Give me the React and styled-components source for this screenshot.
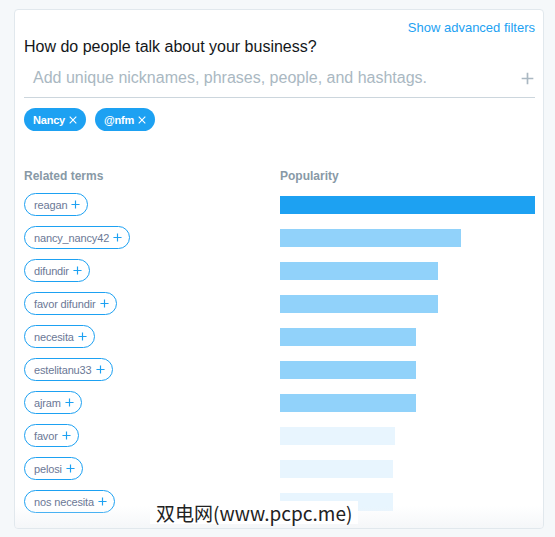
import React from "react";
import styled, { createGlobalStyle } from "styled-components";

const terms = [
  { label: "reagan", width: 255, level: "top" },
  { label: "nancy_nancy42", width: 181, level: "mid" },
  { label: "difundir", width: 158, level: "mid" },
  { label: "favor difundir", width: 158, level: "mid" },
  { label: "necesita", width: 136, level: "mid" },
  { label: "estelitanu33", width: 136, level: "mid" },
  { label: "ajram", width: 136, level: "mid" },
  { label: "favor", width: 115, level: "low" },
  { label: "pelosi", width: 113, level: "low" },
  { label: "nos necesita", width: 113, level: "low" },
];

const barColors = {
  top: "#1da1f2",
  mid: "#91d2fa",
  low: "#e8f5fe",
};

const PlusIcon = ({ size = 9 }) => (
  <svg width={size} height={size} viewBox="0 0 10 10">
    <path d="M5 0.5v9M0.5 5h9" stroke="currentColor" strokeWidth="1.3" fill="none" />
  </svg>
);

const CloseIcon = () => (
  <svg width="8" height="8" viewBox="0 0 8 8">
    <path d="M0.7 0.7l6.6 6.6M7.3 0.7l-6.6 6.6" stroke="currentColor" strokeWidth="1.1" fill="none" />
  </svg>
);

const App = () => {
  return (
    <>
      <GlobalStyle />
      <Card>
        <TopBar>
          <FilterLink>Show advanced filters</FilterLink>
        </TopBar>
        <Question>How do people talk about your business?</Question>
        <InputRow>
          <Placeholder>Add unique nicknames, phrases, people, and hashtags.</Placeholder>
          <AddButton>
            <PlusIcon size={13} />
          </AddButton>
        </InputRow>
        <Tags>
          <Tag>
            Nancy <CloseIcon />
          </Tag>
          <Tag>
            @nfm <CloseIcon />
          </Tag>
        </Tags>
        <Table>
          <ColHead>Related terms</ColHead>
          <ColHead>Popularity</ColHead>
          {terms.map((t) => (
            <React.Fragment key={t.label}>
              <TermCell>
                <Term>
                  {t.label}
                  <PlusWrap>
                    <PlusIcon />
                  </PlusWrap>
                </Term>
              </TermCell>
              <BarCell>
                <Bar $color={barColors[t.level]} style={{ width: t.width }} />
              </BarCell>
            </React.Fragment>
          ))}
        </Table>
        <Fade />
      </Card>
      <Watermark>双电网(www.pcpc.me)</Watermark>
    </>
  );
};

const GlobalStyle = createGlobalStyle`
  body {
    margin: 0;
    background: #f5f8fa;
    font-family: "Liberation Sans", Arial, sans-serif;
  }
`;

const Card = styled.div`
  position: relative;
  box-sizing: border-box;
  margin: 9px 0 0 14px;
  width: 530px;
  height: 520px;
  padding: 9px 8px 0 9px;
  background: #fff;
  border: 1px solid #e1e8ed;
  border-radius: 4px;
  overflow: hidden;
`;

const TopBar = styled.div`
  display: flex;
  justify-content: flex-end;
  height: 18px;
`;

const FilterLink = styled.a`
  font-size: 13px;
  line-height: 17px;
  color: #1da1f2;
  cursor: pointer;
`;

const Question = styled.div`
  font-size: 16px;
  line-height: 20px;
  color: #14171a;
`;

const InputRow = styled.div`
  display: flex;
  align-items: center;
  justify-content: space-between;
  padding: 11px 0 9px 9px;
  border-bottom: 1px solid #ccd6dd;
`;

const Placeholder = styled.span`
  font-size: 16px;
  line-height: 20px;
  color: #aab8c2;
`;

const AddButton = styled.span`
  display: flex;
  color: #aab8c2;
  margin-right: 1px;
`;

const Tags = styled.div`
  display: flex;
  gap: 9px;
  margin-top: 10px;
`;

const Tag = styled.span`
  display: inline-flex;
  align-items: center;
  gap: 4px;
  height: 23px;
  padding: 0 9px 0 9px;
  border-radius: 12px;
  background: #1da1f2;
  color: #fff;
  font-size: 11px;
  font-weight: bold;
  letter-spacing: -0.2px;
`;

const Table = styled.div`
  display: grid;
  grid-template-columns: 256px 1fr;
  row-gap: 10px;
  margin-top: 38px;
`;

const ColHead = styled.div`
  font-size: 12px;
  font-weight: bold;
  line-height: 14px;
  color: #8899a6;
`;

const TermCell = styled.div`
  display: flex;
  align-items: center;
`;

const Term = styled.span`
  display: inline-flex;
  align-items: center;
  gap: 4px;
  box-sizing: border-box;
  height: 23px;
  padding: 0 7px 0 9px;
  border: 1px solid #1da1f2;
  border-radius: 12px;
  font-size: 11px;
  letter-spacing: -0.15px;
  color: #6b7896;
`;

const PlusWrap = styled.span`
  display: flex;
  color: #1da1f2;
`;

const BarCell = styled.div`
  display: flex;
  align-items: center;
`;

const Bar = styled.div`
  height: 18px;
  background: ${(p) => p.$color};
`;

const Fade = styled.div`
  position: absolute;
  left: 0;
  right: 0;
  bottom: 0;
  height: 22px;
  background: linear-gradient(rgba(255, 255, 255, 0), rgba(240, 243, 246, 0.7));
  pointer-events: none;
`;

const Watermark = styled.div`
  position: absolute;
  left: 150px;
  top: 501px;
  padding: 0 6px;
  background: #fff;
  font-family: "Noto Sans CJK SC", "DejaVu Sans", sans-serif;
  font-size: 19px;
  line-height: 23px;
  color: #222;
`;

export default App;
